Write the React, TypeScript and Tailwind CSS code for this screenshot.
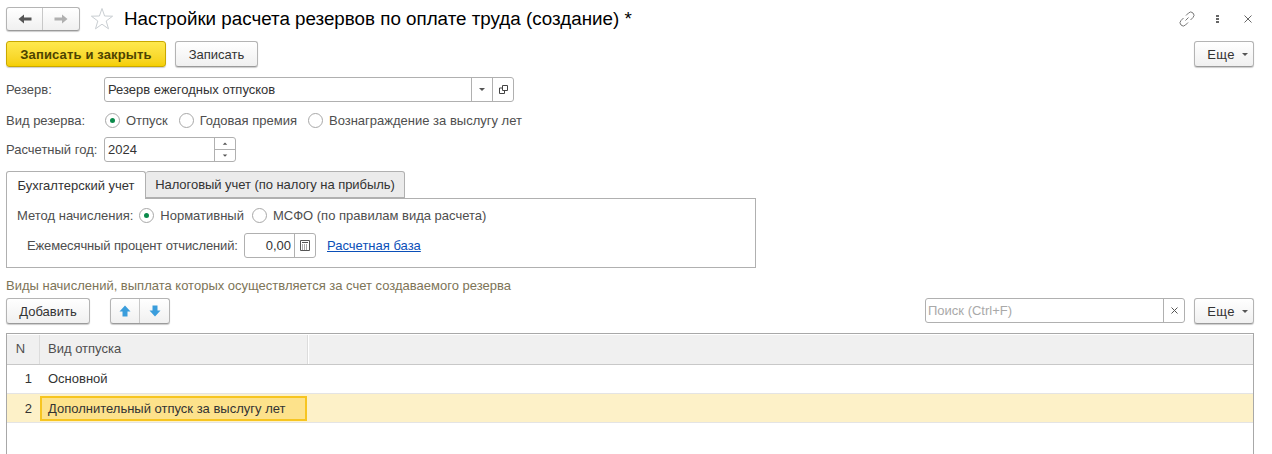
const btn =
  "flex items-center justify-center rounded-[3px] border border-[#b4b4b4] border-b-[#9a9a9a] bg-gradient-to-b from-white to-[#f0f0f0] shadow-[0_1px_1px_rgba(0,0,0,0.2)] text-[#333]";
const label = "text-[#4e4e4e]";

function Caret({ className = "" }: { className?: string }) {
  return <span className={`h-0 w-0 border-x-[3px] border-t-[3px] border-x-transparent border-t-[#555] ${className}`} />;
}

function Radio({ checked, text }: { checked?: boolean; text: string }) {
  return (
    <div className="flex items-center gap-[6px]">
      <span className="flex h-[15px] w-[15px] items-center justify-center rounded-full border border-[#a8a8a8] bg-white">
        {checked && <span className="h-[5px] w-[5px] rounded-full bg-[#0b8a4b]" />}
      </span>
      <span className={label}>{text}</span>
    </div>
  );
}

function Arrow({ dir, color }: { dir: "left" | "right"; color: string }) {
  return (
    <svg width="14" height="10" viewBox="0 0 14 10" className={dir === "right" ? "rotate-180" : ""}>
      <path d="M0.5 5 L6 0.5 V3.5 H13.5 V6.5 H6 V9.5 Z" fill={color} />
    </svg>
  );
}

function BlueArrow({ down }: { down?: boolean }) {
  return (
    <svg width="12" height="12" viewBox="0 0 12 12" className={down ? "rotate-180" : ""}>
      <path d="M6 0.5 L11.5 6.5 H8.5 V11.5 H3.5 V6.5 H0.5 Z" fill="#3a9ddc" />
    </svg>
  );
}

function More() {
  return (
    <div className={`${btn} h-[26px] w-[60px] gap-[7px] pl-[7px]`}>
      <span className="tracking-[0.3px]">Еще</span>
      <Caret />
    </div>
  );
}

export default function App() {
  return (
    <div className="h-[454px] w-[1272px] overflow-hidden bg-white pl-[6px] pr-[18px] pt-[7px] font-['Liberation_Sans',Arial,sans-serif] text-[13px] leading-[15px] text-[#333]">
      {/* header */}
      <div className="flex h-[24px] items-center">
        <div className={`${btn} h-[24px] w-[74px]`}>
          <div className="flex h-full w-[37px] items-center justify-center border-r border-[#c8c8c8]">
            <Arrow dir="left" color="#555" />
          </div>
          <div className="flex h-full w-[37px] items-center justify-center">
            <Arrow dir="right" color="#b0b0b0" />
          </div>
        </div>
        <svg width="24" height="24" viewBox="0 0 24 24" className="ml-[10px]">
          <path d="M12 1.5 L14.6 9 L22.6 9.2 L16.2 14 L18.5 21.8 L12 17.2 L5.5 21.8 L7.8 14 L1.4 9.2 L9.4 9 Z" fill="none" stroke="#c9ced2" strokeWidth="1" />
        </svg>
        <div className="ml-[10px] text-[18.8px] leading-[22px] text-black">Настройки расчета резервов по оплате труда (создание) *</div>
        <div className="ml-auto flex items-center">
          <svg width="16" height="16" viewBox="0 0 16 16" fill="none" stroke="#777" strokeWidth="1" className="mr-[21px]">
            <path d="M6.5 9.5 L9.5 6.5 M7 4.5 L9.5 2 A3 3 0 0 1 14 6.5 L11.5 9 M9 11.5 L6.5 14 A3 3 0 0 1 2 9.5 L4.5 7" />
          </svg>
          <div className="mr-[25px] flex flex-col gap-[1px]">
            <span className="h-[2px] w-[3px] bg-[#666]" />
            <span className="h-[2px] w-[3px] bg-[#666]" />
            <span className="h-[2px] w-[3px] bg-[#666]" />
          </div>
          <svg width="8" height="8" viewBox="0 0 8 8" stroke="#666" strokeWidth="1" className="mr-[2px]">
            <path d="M0.5 0.5 L7.5 7.5 M7.5 0.5 L0.5 7.5" />
          </svg>
        </div>
      </div>

      {/* command bar */}
      <div className="mt-[10px] flex h-[26px]">
        <div className="flex w-[160px] items-center justify-center rounded-[3px] border border-[#c9a800] bg-gradient-to-b from-[#ffe94d] to-[#f5cf00] font-bold tracking-[0.15px] text-[#4d4300] shadow-[0_1px_1px_rgba(0,0,0,0.2)]">
          Записать и закрыть
        </div>
        <div className={`${btn} ml-[9px] w-[83px]`}>Записать</div>
        <div className="ml-auto">
          <More />
        </div>
      </div>

      {/* Резерв */}
      <div className="mt-[10px] flex h-[25px] items-center">
        <div className={`${label} w-[98px]`}>Резерв:</div>
        <div className="flex h-[25px] w-[410px] items-center rounded-[3px] border border-[#b0b0b0]">
          <div className="flex-1 pl-[3px]">Резерв ежегодных отпусков</div>
          <div className="flex h-full w-[21px] items-center justify-center border-l border-[#b0b0b0]">
            <Caret />
          </div>
          <div className="flex h-full w-[21px] items-center justify-center border-l border-[#b0b0b0]">
            <svg width="9" height="9" viewBox="0 0 9 9" fill="none" stroke="#444">
              <path d="M3.5 0.5 H8.5 V5.5 H3.5 Z M3.5 3 H0.5 V8.5 H5.5 V5.5" />
            </svg>
          </div>
        </div>
      </div>

      {/* Вид резерва */}
      <div className="mt-[10px] flex h-[16px] items-center">
        <div className={`${label} w-[99px]`}>Вид резерва:</div>
        <div className="flex gap-[11px]">
          <Radio checked text="Отпуск" />
          <Radio text="Годовая премия" />
          <Radio text="Вознаграждение за выслугу лет" />
        </div>
      </div>

      {/* Расчетный год */}
      <div className="mt-[9px] flex h-[25px] items-center">
        <div className={`${label} w-[98px]`}>Расчетный год:</div>
        <div className="flex h-[25px] w-[132px] items-center rounded-[3px] border border-[#b0b0b0]">
          <div className="flex-1 pl-[3px]">2024</div>
          <div className="flex h-full w-[21px] flex-col border-l border-[#b0b0b0]">
            <div className="flex flex-1 items-center justify-center border-b border-[#b0b0b0]">
              <Caret className="rotate-180 scale-75" />
            </div>
            <div className="flex flex-1 items-center justify-center">
              <Caret className="scale-75" />
            </div>
          </div>
        </div>
      </div>

      {/* tabs */}
      <div className="mt-[9px] w-[750px]">
        <div className="relative z-10 flex h-[28px]">
          <div className="flex h-[28px] w-[140px] items-center justify-center rounded-t-[3px] border border-b-0 border-[#b0b0b0] bg-white">
            Бухгалтерский учет
          </div>
          <div className="flex h-[27px] w-[259px] items-center justify-center rounded-t-[3px] border border-l-0 border-[#b0b0b0] bg-[#ebebeb] tracking-[-0.05px]">
            Налоговый учет (по налогу на прибыль)
          </div>
        </div>
        <div className="-mt-px h-[70px] border border-[#b0b0b0] pl-[10px]">
          <div className="mt-[8px] flex h-[16px] items-center">
            <div className={`${label} mr-[6px]`}>Метод начисления:</div>
            <div className="flex gap-[8px]">
              <Radio checked text="Нормативный" />
              <Radio text="МСФО (по правилам вида расчета)" />
            </div>
          </div>
          <div className="mt-[10px] flex h-[25px] items-center pl-[10px]">
            <div className={`${label} w-[217px] tracking-[-0.13px]`}>Ежемесячный процент отчислений:</div>
            <div className="flex h-[25px] w-[72px] items-center rounded-[3px] border border-[#b0b0b0]">
              <div className="flex-1 pr-[3px] text-right">0,00</div>
              <div className="flex h-full w-[21px] items-center justify-center border-l border-[#b0b0b0]">
                <svg width="10" height="11" viewBox="0 0 10 11" fill="none" stroke="#555">
                  <path d="M0.5 0.5 H9.5 V10.5 H0.5 Z M2 2.5 H8" />
                  <path d="M2 5 H8 M2 7 H8 M2 9 H8" strokeDasharray="1 1" />
                </svg>
              </div>
            </div>
            <div className="ml-[11px] text-[#0b4fb8] underline">Расчетная база</div>
          </div>
        </div>
      </div>

      {/* caption */}
      <div className="mt-[10px] text-[#7d7457]">Виды начислений, выплата которых осуществляется за счет создаваемого резерва</div>

      {/* table toolbar */}
      <div className="mt-[5px] flex h-[26px]">
        <div className={`${btn} w-[84px]`}>Добавить</div>
        <div className={`${btn} ml-[20px] w-[60px]`}>
          <div className="flex h-full w-[30px] items-center justify-center border-r border-[#c8c8c8]">
            <BlueArrow />
          </div>
          <div className="flex h-full w-[30px] items-center justify-center">
            <BlueArrow down />
          </div>
        </div>
        <div className="ml-auto flex h-[25px] w-[260px] items-center rounded-[3px] border border-[#b0b0b0]">
          <div className="flex-1 pl-[2px] text-[#a9a9a9]">Поиск (Ctrl+F)</div>
          <div className="flex h-full w-[21px] items-center justify-center border-l border-[#b0b0b0]">
            <svg width="7" height="7" viewBox="0 0 7 7" stroke="#555">
              <path d="M0.5 0.5 L6.5 6.5 M6.5 0.5 L0.5 6.5" />
            </svg>
          </div>
        </div>
        <div className="ml-[9px]">
          <More />
        </div>
      </div>

      {/* table */}
      <div className="mt-[9px] h-[200px] border border-b-0 border-[#a8a8a8]">
        <div className="flex h-[31px] border-b border-[#c8c8c8] bg-white pt-px">
          <div className={`${label} flex w-[33px] items-center justify-center border-r border-[#dcdcdc] bg-[#f0f0f0] pr-[5px] pb-[2px]`}>N</div>
          <div className={`${label} flex w-[268px] items-center border-r border-[#dcdcdc] bg-[#f0f0f0] pl-[8px] pb-[2px]`}>Вид отпуска</div>
          <div className="ml-px flex-1 bg-[#f0f0f0]" />
        </div>
        <div className="flex h-[29px] items-center border-b border-[#e4e4e4] pb-px">
          <div className="w-[25px] text-right">1</div>
          <div className="pl-[16px]">Основной</div>
        </div>
        <div className="flex h-[29px] items-center border-b border-[#e4e4e4] bg-[#fdf1c8]">
          <div className="w-[25px] text-right">2</div>
          <div className="ml-[8px] flex h-[25px] w-[267px] items-center border-2 border-[#f7c520] bg-[#fde28b] pl-[6px]">
            Дополнительный отпуск за выслугу лет
          </div>
        </div>
      </div>
    </div>
  );
}
